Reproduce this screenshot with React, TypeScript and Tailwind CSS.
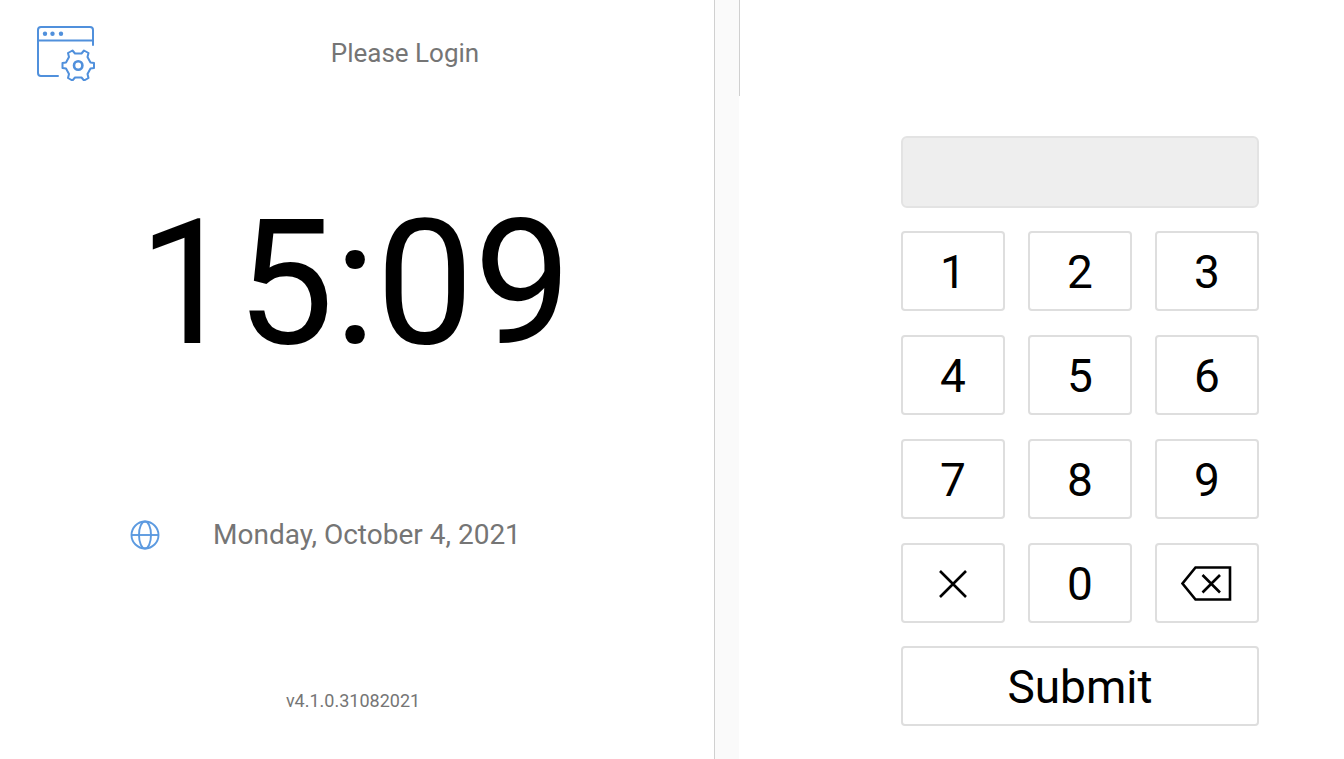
import { useState } from "react";

const digits = ["1", "2", "3", "4", "5", "6", "7", "8", "9"];

const keyStyle =
  "flex h-20 items-center justify-center rounded border-2 border-[#dedede] bg-white pt-0.5 text-[46px] leading-none text-black";

const SettingsIcon = () => {
  return (
    <svg className="h-14 w-15" viewBox="0 0 60 56" fill="none" stroke="#5090dc" strokeWidth="2" strokeLinecap="round" strokeLinejoin="round">
      <path d="M22 51H5a3 3 0 0 1-3-3V5a3 3 0 0 1 3-3h49a3 3 0 0 1 3 3v15" />
      <path d="M2 15.500h55" />
      <g fill="#5090dc" stroke="none">
        <circle cx="9" cy="8.700" r="2.200" />
        <circle cx="16.500" cy="8.700" r="2.200" />
        <circle cx="25" cy="8.700" r="2.200" />
      </g>
      <path d="M36.500 25.500l2.500 3h6.500l2.500-3 4.500 2.500-1 4 3 5.500 3.500.5v5l-3.500.5-3 5.500 1 4-4.500 2.500-2.500-3h-6.500l-2.500 3-4.500-2.500 1-4-3-5.500-3.500-.5v-5l3.500-.5 3-5.500-1-4z" />
      <circle cx="42.200" cy="40.500" r="4.200" strokeWidth="2.600" />
    </svg>
  );
};

const GlobeIcon = () => {
  return (
    <svg className="size-[30px]" viewBox="0 0 30 30" fill="none" stroke="#5c9ae0" strokeWidth="1.900">
      <circle cx="15" cy="15" r="13.500" />
      <ellipse cx="15" cy="15" rx="6" ry="13.500" />
      <path d="M1.500 15h27" />
    </svg>
  );
};

const ClearIcon = () => {
  return (
    <svg className="size-7" viewBox="0 0 28 28" fill="none" stroke="black" strokeWidth="2.600">
      <path d="M1 1l26 26M27 1L1 27" />
    </svg>
  );
};

const BackspaceIcon = () => {
  return (
    <svg className="h-9 w-[52px]" viewBox="0 0 52 36" fill="none" stroke="black" strokeWidth="2.600">
      <path d="M14.500 1.500H49v32H14.500L1.500 17.500z" />
      <path d="M21.500 9l17.500 17.500M39 9L21.500 26.500" />
    </svg>
  );
};

const Clock = () => {
  return (
    <section className="w-[53.2%] border-r border-[#d0d0d0] bg-white pt-[25px]">
      <div className="flex items-center pl-9">
        <button aria-label="Settings" className="cursor-pointer">
          <SettingsIcon />
        </button>
        <h1 className="flex-1 text-center text-[26px] leading-8 text-[#757575]">Please Login</h1>
      </div>
      <p className="mt-29 pr-1 text-center text-[174px] leading-none text-black">15:09</p>
      <div className="mt-37 flex items-center gap-[53px] pl-[130px]">
        <button aria-label="Language" className="cursor-pointer">
          <GlobeIcon />
        </button>
        <p className="text-[28px] leading-8 text-[#757575]">Monday, October 4, 2021</p>
      </div>
      <p className="mt-[138px] pr-2 text-center text-[18px] leading-6 text-[#757575]">v4.1.0.31082021</p>
    </section>
  );
};

const Keypad = () => {
  const [pin, setPin] = useState("");

  return (
    <form className="mr-[85px] ml-auto flex w-[358px] flex-col gap-[23px] pt-34" onSubmit={(e) => e.preventDefault()}>
      <input
        type="password"
        aria-label="PIN"
        readOnly
        value={pin}
        className="h-[72px] w-full rounded-md border-2 border-[#e3e3e3] bg-[#eeeeee] px-4 text-center text-[46px] outline-none"
      />
      <div className="grid grid-cols-3 gap-x-[23px] gap-y-6">
        {digits.map((digit) => (
          <button key={digit} type="button" className={keyStyle} onClick={() => setPin(pin + digit)}>
            {digit}
          </button>
        ))}
        <button type="button" aria-label="Clear" className={keyStyle} onClick={() => setPin("")}>
          <ClearIcon />
        </button>
        <button type="button" className={keyStyle} onClick={() => setPin(pin + "0")}>
          0
        </button>
        <button type="button" aria-label="Backspace" className={keyStyle} onClick={() => setPin(pin.slice(0, -1))}>
          <BackspaceIcon />
        </button>
      </div>
      <button type="submit" className={keyStyle}>
        Submit
      </button>
    </form>
  );
};

const App = () => {
  return (
    <main className="flex min-h-screen bg-white font-[Roboto,sans-serif]">
      <Clock />
      <div className="w-6 bg-[#fafafa]" />
      <div className="h-24 w-px bg-[#d0d0d0]" />
      <Keypad />
    </main>
  );
};

export default App;
